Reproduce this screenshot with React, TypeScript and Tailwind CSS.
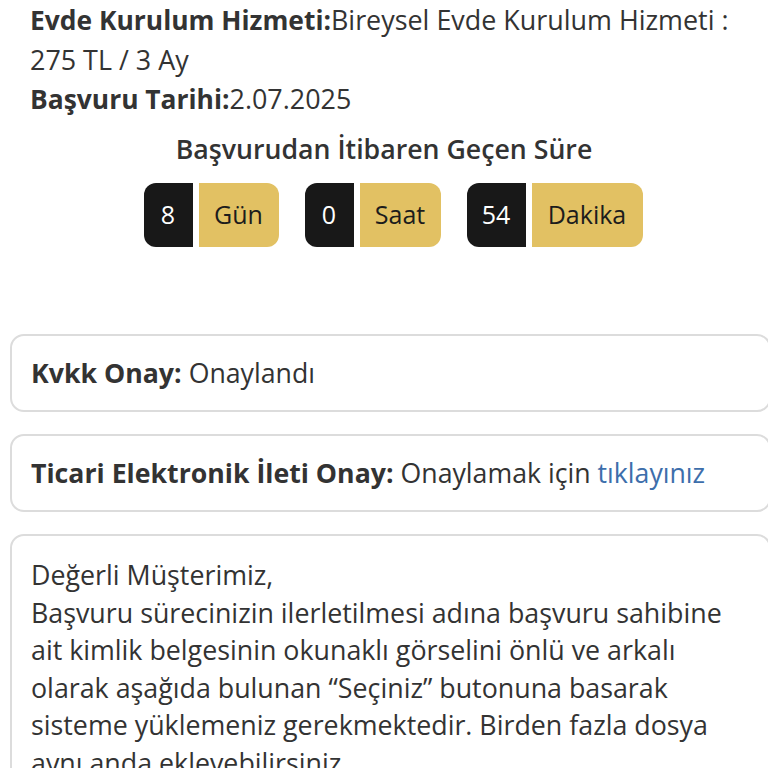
import React from "react";

const font = { fontFamily: '"Open Sans", "Noto Sans", sans-serif' };

function TimerPart({ value, label, numW, labelW }: { value: string; label: string; numW: string; labelW: string }) {
  return (
    <div className="flex h-[64px] gap-[6px]">
      <div className={`flex items-center justify-center rounded-l-[12px] bg-[#181818] text-[25px] text-white ${numW}`}>
        {value}
      </div>
      <div className={`flex items-center justify-center rounded-r-[12px] bg-[#e2c163] text-[25px] text-[#1c1c1c] ${labelW}`}>
        {label}
      </div>
    </div>
  );
}

export default function App() {
  return (
    <div className="h-[768px] w-[768px] overflow-hidden bg-white text-[#333333]" style={font}>
      <div className="px-[30px] text-[26.9px] leading-[39px]">
        <p>
          <span className="text-[26.4px] font-bold">Evde Kurulum Hizmeti:</span>Bireysel Evde Kurulum Hizmeti : 275 TL / 3 Ay
        </p>
        <p>
          <span className="text-[26.4px] font-bold">Başvuru Tarihi:</span>2.07.2025
        </p>
      </div>

      <h2 className="mt-[11px] text-center text-[26.7px] font-semibold leading-[37px]">Başvurudan İtibaren Geçen Süre</h2>

      <div className="mt-[16px] flex justify-center gap-[26px] pl-[18px]">
        <TimerPart value="8" label="Gün" numW="w-[49px]" labelW="w-[80px]" />
        <TimerPart value="0" label="Saat" numW="w-[49px]" labelW="w-[81px]" />
        <TimerPart value="54" label="Dakika" numW="w-[59px]" labelW="w-[111px]" />
      </div>

      <div className="mt-[87px] flex flex-col gap-[22px] pl-[10px]">
        <div className="flex h-[78px] w-[761px] shrink-0 items-center rounded-[14px] border-2 border-[#dcdcdc] px-[19px] text-[26.7px]">
          <span className="font-bold">Kvkk Onay:</span>
          <span className="ml-[7px]">Onaylandı</span>
        </div>
        <div className="flex h-[78px] w-[761px] shrink-0 items-center rounded-[14px] border-2 border-[#dcdcdc] px-[19px] text-[26.7px]">
          <span className="font-bold">Ticari Elektronik İleti Onay:</span>
          <span className="ml-[7px]">Onaylamak için</span>
          <span className="ml-[7px] text-[#3d6eab]">tıklayınız</span>
        </div>
        <div className="w-[761px] shrink-0 rounded-[14px] border-2 border-[#dcdcdc] px-[19px] pt-[20px] text-[26.8px] leading-[37.6px]">
          <p>Değerli Müşterimiz,</p>
          <p>
            Başvuru sürecinizin ilerletilmesi adına başvuru sahibine ait kimlik belgesinin okunaklı görselini önlü ve
            arkalı olarak aşağıda bulunan “Seçiniz” butonuna basarak sisteme yüklemeniz gerekmektedir. Birden fazla dosya
            aynı anda eklevebilirsiniz.
          </p>
        </div>
      </div>
    </div>
  );
}
